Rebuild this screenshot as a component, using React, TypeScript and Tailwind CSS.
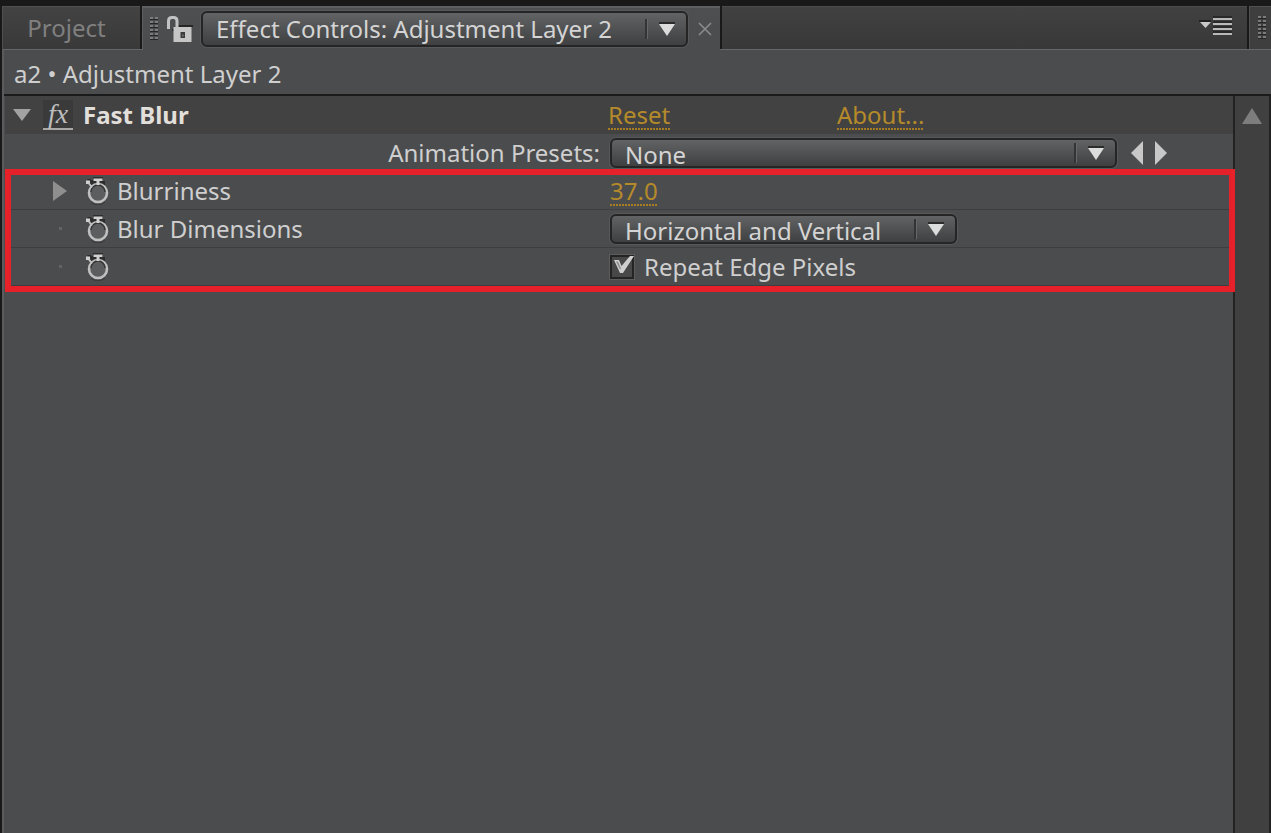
import { useState } from "react";
import type { ReactNode } from "react";

function Grip() {
  return (
    <svg width="10" height="24" viewBox="0 0 10 24" aria-hidden="true">
      {[0, 1, 2, 3, 4, 5].map((row) => (
        <g key={row}>
          <rect x="1" y={row * 4} width="3" height="2" fill="#7c7c7c" />
          <rect x="6" y={row * 4} width="3" height="2" fill="#7c7c7c" />
          <rect x="1" y={row * 4 + 2} width="8" height="1" fill="#262626" />
        </g>
      ))}
    </svg>
  );
}

function LockIcon() {
  return (
    <svg width="26" height="28" viewBox="0 0 26 28" aria-hidden="true">
      <path d="M11 10h15v2H11z" fill="#262626" />
      <path d="M5 14h3v2H5z" fill="#2c2c2c" />
      <path d="M1.500 14V6Q1.500 2.500 5 2.500H6.500Q10 2.500 10 6V13" fill="none" stroke="#c2c2c2" strokeWidth="3" />
      <rect x="6.500" y="12" width="18" height="15" fill="#c6c6c6" />
      <path d="M13.500 17h4.500v6h-4.500z" fill="#3c3c3c" />
      <path d="M15 19.500h1.500v2H15z" fill="#777" />
    </svg>
  );
}

function StopwatchIcon() {
  return (
    <svg width="26" height="28" viewBox="0 0 26 28" aria-hidden="true">
      <path d="M2 2h4v1h2V0h10v4h2v4h-3l-4-2-5 3-3-2z" fill="#262626" opacity="0.8" />
      <circle cx="13" cy="16" r="9" fill="#5c5d5e" stroke="#c0c0c0" strokeWidth="2.600" />
      <path d="M6 15a7 7 0 0 1 14 0" fill="none" stroke="#343434" strokeWidth="1.500" />
      <path d="M6 25.500a12 12 0 0 0 14 0" fill="none" stroke="#3a3a3a" strokeWidth="1" />
      <path d="M8.500 1.500h9v2.500h-3v4h-3V4h-3z" fill="#d0d0d0" />
      <rect x="1" y="3.500" width="4" height="3.500" fill="#cfcfcf" />
      <path d="M4 6.500l3 4" stroke="#c0c0c0" strokeWidth="2" />
    </svg>
  );
}

function Dropdown({ label, options, className }: { label: string; options: string[]; className: string }) {
  return (
    <div className={`relative flex items-center rounded-md border-2 border-[#252525] bg-linear-to-b from-[#626364] to-[#3f4041] shadow-[0_0_0_1px_#57585a] ${className}`}>
      <select
        aria-label={label}
        className="h-full w-full appearance-none bg-transparent pl-[13px] pr-10 text-[#d4d4d4] outline-none"
      >
        {options.map((option) => (
          <option key={option}>{option}</option>
        ))}
      </select>
      <div className="pointer-events-none absolute inset-y-0 right-0 flex items-center gap-2.5 pr-2.5">
        <span className="h-5 w-[3px] border-l-2 border-r border-l-[#333435] border-r-[#66676a]" />
        <svg width="18" height="14" viewBox="0 0 18 14" aria-hidden="true">
          <path d="M1 0h16v2H1z" fill="#2b2b2b" />
          <path d="M1 2h16L9 14z" fill="#dcdcdc" />
        </svg>
      </div>
    </div>
  );
}

const dots =
  "bg-[repeating-linear-gradient(90deg,#a97d22_0_2px,transparent_2px_3px)] bg-[length:100%_2px] bg-bottom-left bg-no-repeat";

function PropertyRow({ twirl, label, children }: { twirl: boolean; label?: string; children: ReactNode }) {
  return (
    <div className="flex h-[38px] items-center border-b border-[#3d3e3f] last:border-b-0">
      <div className="flex w-[605px] shrink-0 items-center">
        <div className="flex w-20 shrink-0 justify-end pr-[18px]">
          {twirl ? (
            <button aria-label="Expand Blurriness" className="block">
              <svg width="14" height="20" viewBox="0 0 14 20" aria-hidden="true">
                <path d="M0 0v20l14-10z" fill="#8f8f8f" />
              </svg>
            </button>
          ) : (
            <span className="mr-[5px] size-[3px] bg-[#626365]" />
          )}
        </div>
        <button aria-label={`Animate ${label ?? "Repeat Edge Pixels"}`} className="block shrink-0">
          <StopwatchIcon />
        </button>
        {label && <span className="pl-1.5">{label}</span>}
      </div>
      {children}
    </div>
  );
}

export default function App() {
  const [amount, setAmount] = useState("37.0");
  const [repeat, setRepeat] = useState(true);

  return (
    <div className="flex min-h-screen flex-col bg-[#191919] pt-1.5 font-['Noto_Sans','Open_Sans',sans-serif] text-[24px] leading-[30px] text-[#cfcfcf]">
      <header className="flex h-[43px] pl-0.5">
        <button className="w-[138px] border-t border-l border-[#505050] bg-linear-to-b from-[#434343] to-[#393939] pr-2.5 text-center text-[#808080]">
          Project
        </button>
        <div className="z-10 -mb-px ml-0.5 flex items-center border-t-2 border-l border-[#5e5f60] bg-linear-to-b from-[#4e4f50] to-[#4b4c4e] pl-1.5">
          <Grip />
          <button aria-label="Lock panel" className="mx-2 block">
            <LockIcon />
          </button>
          <Dropdown label="Panel" options={["Effect Controls: Adjustment Layer 2"]} className="h-9 w-[487px]" />
          <button aria-label="Close tab" className="ml-2.5 mr-2 block">
            <svg width="14" height="14" viewBox="0 0 14 14" aria-hidden="true">
              <path d="M1 1l12 12M13 1L1 13" stroke="#8d8d8d" strokeWidth="1.500" />
            </svg>
          </button>
        </div>
        <div className="ml-0.5 flex min-w-0 grow items-center justify-end border-t border-[#4b4b4b] bg-linear-to-b from-[#414142] to-[#393839] pr-3.5 pb-1">
          <button aria-label="Panel menu" className="block">
            <svg width="34" height="20" viewBox="0 0 34 20" aria-hidden="true">
              <path d="M0 4h12v2H0z" fill="#222" />
              <path d="M1 6h11l-5.500 6z" fill="#c9c9c9" />
              {[2, 7, 12, 17].map((y) => (
                <g key={y}>
                  <rect x="14" y={y - 2} width="19" height="2" fill="#292929" />
                  <rect x="14" y={y} width="19" height="2" fill="#b9b9b9" />
                </g>
              ))}
            </svg>
          </button>
        </div>
        <div className="ml-0.5 flex w-[22px] items-center justify-end border-t border-l border-[#505050] bg-[#3e3e3e] pr-1">
          <Grip />
        </div>
      </header>

      <main className="ml-0.5 flex grow flex-col border-l-2 border-[#5b5a5c] bg-[#4b4c4e]">
        <div className="flex h-[45px] items-center border-t border-[#66676a] pl-2.5 pt-1">a2 • Adjustment Layer 2</div>
        <div className="flex grow border-t-2 border-[#1b1b1b]">
          <section className="min-w-0 grow pl-px">
            <div className="flex h-[38px] items-center bg-[#424243]">
              <div className="flex w-[603px] shrink-0 items-center">
                <button aria-label="Collapse Fast Blur" className="ml-2 block">
                  <svg width="18" height="14" viewBox="0 0 18 14" aria-hidden="true">
                    <path d="M0 1h18L9 13z" fill="#a2a2a2" />
                  </svg>
                </button>
                <button
                  aria-label="Toggle effect"
                  className="ml-3 h-[30px] w-[30px] border-b-2 border-[#a8a8a8] bg-[#3a3a3b] font-['Liberation_Serif',serif] text-[28px] leading-6 text-[#bdbdbd] italic"
                >
                  fx
                </button>
                <h1 className="ml-2.5 font-bold text-[#e2dfda]">Fast Blur</h1>
              </div>
              <div className="flex w-[229px] shrink-0">
                <a href="#reset" className={`text-[#b58a2a] ${dots}`}>Reset</a>
              </div>
              <a href="#about" className={`text-[#b58a2a] ${dots}`}>About...</a>
            </div>

            <div className="flex h-[38px] items-center">
              <span className="w-[605px] shrink-0 pr-2.5 text-right">Animation Presets:</span>
              <Dropdown label="Animation Presets" options={["None"]} className="h-[30px] w-[507px]" />
              <button aria-label="Previous preset" className="ml-3.5 block">
                <svg width="12" height="24" viewBox="0 0 12 24" aria-hidden="true">
                  <path d="M12 0v24L0 12z" fill="#c8c8c8" />
                </svg>
              </button>
              <button aria-label="Next preset" className="ml-3 block">
                <svg width="12" height="24" viewBox="0 0 12 24" aria-hidden="true">
                  <path d="M0 0v24l12-12z" fill="#c8c8c8" />
                </svg>
              </button>
            </div>

            <div className="relative">
              <PropertyRow twirl label="Blurriness">
                <input
                  aria-label="Blurriness"
                  value={amount}
                  onChange={(event) => setAmount(event.target.value)}
                  className={`h-[30px] w-12 text-[#b58a2a] outline-none ${dots}`}
                />
              </PropertyRow>
              <PropertyRow twirl={false} label="Blur Dimensions">
                <Dropdown
                  label="Blur Dimensions"
                  options={["Horizontal and Vertical", "Horizontal", "Vertical"]}
                  className="h-[30px] w-[347px]"
                />
              </PropertyRow>
              <PropertyRow twirl={false}>
                <label className="flex items-center">
                  <span className="relative mr-2.5 block size-6">
                    <input
                      type="checkbox"
                      checked={repeat}
                      onChange={(event) => setRepeat(event.target.checked)}
                      className="block size-6 appearance-none border-2 border-[#242424] bg-[#484848] shadow-[0_0_0_1px_#5c5c5c]"
                    />
                    {repeat && (
                      <svg className="pointer-events-none absolute inset-0" width="24" height="24" viewBox="0 0 24 24" aria-hidden="true">
                        <path d="M4 5h5l2.500 6L20 1h4L13 18h-3z" fill="#cfcfcf" />
                        <path d="M6 6.500h2l3 7-1 1z" fill="#8c8c8c" />
                      </svg>
                    )}
                  </span>
                  <span>Repeat Edge Pixels</span>
                </label>
              </PropertyRow>
              <div className="pointer-events-none absolute -top-[3px] -right-0.5 -bottom-1.5 left-0 border-[6px] border-[#e6212a]" />
            </div>
          </section>
          <aside className="flex w-[38px] shrink-0 justify-center border-x-2 border-[#222223] bg-[#404041] pt-3">
            <button aria-label="Scroll up" className="block self-start">
              <svg width="20" height="16" viewBox="0 0 20 16" aria-hidden="true">
                <path d="M10 0l10 16H0z" fill="#7d7d7d" />
              </svg>
            </button>
          </aside>
        </div>
      </main>
    </div>
  );
}
